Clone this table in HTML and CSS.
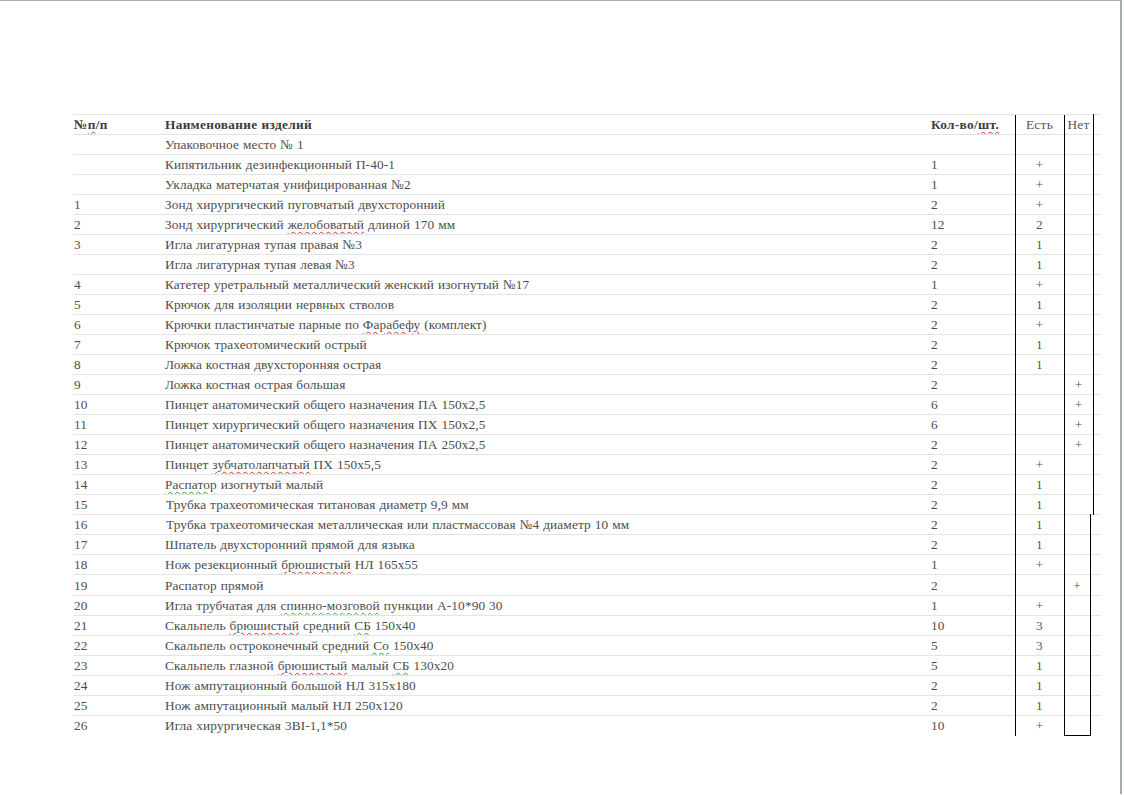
FILE: index.html
```html
<!DOCTYPE html>
<html lang="ru">
<head>
<meta charset="utf-8">
<title>Перечень изделий</title>
<link rel="stylesheet" href="styles.css">
</head>
<body>
<div class="page">
<table class="list">
<colgroup>
<col class="c-num"><col class="c-name"><col class="c-qty"><col class="c-est"><col class="c-net"><col class="c-netx"><col class="c-rest">
</colgroup>
<tr class="head"><td>№<span class="g">п</span>/п</td><td>Наименование изделий</td><td>Кол-во/<span class="r">шт.</span></td><td class="est">Есть</td><td class="net" colspan="2">Нет</td><td></td></tr>
<tr><td></td><td>Упаковочное место № 1</td><td></td><td class="est"></td><td class="net" colspan="2"></td><td></td></tr>
<tr><td></td><td>Кипятильник  дезинфекционный  П-40-1</td><td>1</td><td class="est">+</td><td class="net" colspan="2"></td><td></td></tr>
<tr><td></td><td>Укладка матерчатая  унифицированная  №2</td><td>1</td><td class="est">+</td><td class="net" colspan="2"></td><td></td></tr>
<tr><td>1</td><td>Зонд хирургический пуговчатый двухсторонний</td><td>2</td><td class="est">+</td><td class="net" colspan="2"></td><td></td></tr>
<tr><td>2</td><td>Зонд хирургический <span class="r">желобоватый</span> длиной 170 мм</td><td>12</td><td class="est">2</td><td class="net" colspan="2"></td><td></td></tr>
<tr><td>3</td><td>Игла лигатурная тупая правая №3</td><td>2</td><td class="est">1</td><td class="net" colspan="2"></td><td></td></tr>
<tr><td></td><td>Игла лигатурная тупая левая №3</td><td>2</td><td class="est">1</td><td class="net" colspan="2"></td><td></td></tr>
<tr><td>4</td><td>Катетер  уретральный металлический женский изогнутый №17</td><td>1</td><td class="est">+</td><td class="net" colspan="2"></td><td></td></tr>
<tr><td>5</td><td>Крючок для изоляции нервных стволов</td><td>2</td><td class="est">1</td><td class="net" colspan="2"></td><td></td></tr>
<tr><td>6</td><td>Крючки пластинчатые  парные по <span class="r">Фарабефу</span> (комплект)</td><td>2</td><td class="est">+</td><td class="net" colspan="2"></td><td></td></tr>
<tr><td>7</td><td>Крючок трахеотомический  острый</td><td>2</td><td class="est">1</td><td class="net" colspan="2"></td><td></td></tr>
<tr><td>8</td><td>Ложка костная двухсторонняя острая</td><td>2</td><td class="est">1</td><td class="net" colspan="2"></td><td></td></tr>
<tr><td>9</td><td>Ложка костная острая большая</td><td>2</td><td class="est"></td><td class="net" colspan="2">+</td><td></td></tr>
<tr><td>10</td><td>Пинцет  анатомический общего назначения ПА  150х2,5</td><td>6</td><td class="est"></td><td class="net" colspan="2">+</td><td></td></tr>
<tr><td>11</td><td>Пинцет  хирургический общего назначения ПХ  150х2,5</td><td>6</td><td class="est"></td><td class="net" colspan="2">+</td><td></td></tr>
<tr><td>12</td><td>Пинцет  анатомический общего назначения ПА  250х2,5</td><td>2</td><td class="est"></td><td class="net" colspan="2">+</td><td></td></tr>
<tr><td>13</td><td>Пинцет  <span class="r">зубчатолапчатый</span> ПХ 150х5,5</td><td>2</td><td class="est">+</td><td class="net" colspan="2"></td><td></td></tr>
<tr><td>14</td><td><span class="g">Распатор</span> изогнутый  малый</td><td>2</td><td class="est">1</td><td class="net" colspan="2"></td><td></td></tr>
<tr><td>15</td><td class="indent">Трубка трахеотомическая титановая  диаметр  9,9 мм</td><td>2</td><td class="est">1</td><td class="net" colspan="2"></td><td></td></tr>
<tr><td>16</td><td class="indent">Трубка трахеотомическая металлическая или пластмассовая №4 диаметр 10 мм</td><td>2</td><td class="est">1</td><td class="net2"></td><td></td><td></td></tr>
<tr><td>17</td><td>Шпатель  двухсторонний прямой для языка</td><td>2</td><td class="est">1</td><td class="net2"></td><td></td><td></td></tr>
<tr><td>18</td><td>Нож  резекционный <span class="r">брюшистый</span> НЛ 165х55</td><td>1</td><td class="est">+</td><td class="net2"></td><td></td><td></td></tr>
<tr class="tall"><td>19</td><td>Распатор прямой</td><td>2</td><td class="est"></td><td class="net2">+</td><td></td><td></td></tr>
<tr><td>20</td><td>Игла трубчатая  для <span class="g">спинно-мозговой</span> пункции А-10*90 30</td><td>1</td><td class="est">+</td><td class="net2"></td><td></td><td></td></tr>
<tr><td>21</td><td>Скальпель <span class="r">брюшистый</span> средний <span class="g">СБ</span> 150х40</td><td>10</td><td class="est">3</td><td class="net2"></td><td></td><td></td></tr>
<tr><td>22</td><td>Скальпель остроконечный средний<span class="g"> Со</span> 150х40</td><td>5</td><td class="est">3</td><td class="net2"></td><td></td><td></td></tr>
<tr><td>23</td><td>Скальпель глазной <span class="r">брюшистый</span> малый <span class="g">СБ</span> 130х20</td><td>5</td><td class="est">1</td><td class="net2"></td><td></td><td></td></tr>
<tr><td>24</td><td>Нож ампутационный  большой НЛ 315х180</td><td>2</td><td class="est">1</td><td class="net2"></td><td></td><td></td></tr>
<tr><td>25</td><td>Нож ампутационный  малый НЛ 250х120</td><td>2</td><td class="est">1</td><td class="net2"></td><td></td><td></td></tr>
<tr class="last"><td>26</td><td>Игла хирургическая 3ВI-1,1*50</td><td>10</td><td class="est">+</td><td class="net2"></td><td></td><td></td></tr>
</table>
</div>
</body>
</html>
```
FILE: styles.css
```css
html, body {
  margin: 0;
  padding: 0;
  background: #ffffff;
}
.page {
  width: 1122px;
  height: 794px;
  border-top: 1px solid #a9adb2;
  border-right: 2px solid #a9adb2;
  box-sizing: border-box;
  padding: 113px 0 0 73px;
  background: #ffffff;
}
.list {
  border-collapse: collapse;
  table-layout: fixed;
  width: 1028px;
  font-family: "Liberation Serif", "Times New Roman", serif;
  font-size: 13.33px;
  letter-spacing: 0.1px;
  word-spacing: 0.5px;
  color: #4d4d4d;
}
.c-num { width: 91px; }
.c-name { width: 766px; }
.c-qty { width: 85px; }
.c-est { width: 49px; }
.c-net { width: 26px; }
.c-netx { width: 3px; }
.c-rest { width: 8px; }
.list td {
  height: 19px;
  padding: 0 0 0 1px;
  border-top: 1px solid #e4e4e4;
  white-space: nowrap;
  overflow: hidden;
  line-height: 19px;
  vertical-align: middle;
}
.list .tall td {
  height: 20px;
}
.list td.indent {
  padding-left: 2px;
}
.head td {
  font-weight: bold;
  color: #3c3c3c;
  letter-spacing: 0.3px;
}
.list td.est {
  border-left: 1px solid #000;
  text-align: center;
  padding: 0;
  font-weight: normal;
  color: #555;
}
.list td.net, .list td.net2 {
  border-left: 1px solid #000;
  border-right: 1px solid #000;
  text-align: center;
  padding: 0;
  font-weight: normal;
  color: #555;
}
.list .last td.net2 {
  border-bottom: 1px solid #000;
}
.r {
  text-decoration: underline wavy #e0302a;
  text-decoration-thickness: 1px;
  text-underline-offset: 2px;
}
.g {
  text-decoration: underline wavy #2fa52f;
  text-decoration-thickness: 1px;
  text-underline-offset: 2px;
}
```
